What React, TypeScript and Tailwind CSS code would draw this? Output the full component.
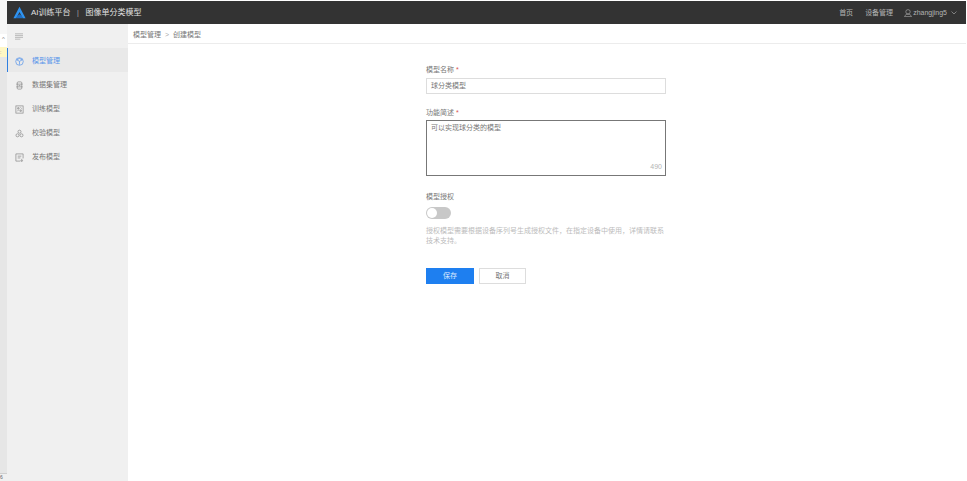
import React from "react";

function NavIcon({ kind }: { kind: string }) {
  const c = kind === "model" ? "#5b96ea" : "#8a8a8a";
  return (
    <svg width="9" height="9" viewBox="0 0 10 10" fill="none" stroke={c} strokeWidth="0.8" className="ml-[1px] shrink-0">
      {kind === "model" && (
        <>
          <circle cx="5" cy="5" r="4.2" />
          <path d="M2 3.2 5 4.8 8 3.2M5 4.8V8.6M2 3.2 5 1.6 8 3.2" />
        </>
      )}
      {kind === "data" && (
        <>
          <rect x="2.5" y="1" width="5" height="8" rx="1" />
          <path d="M1.5 3.5h7M1.5 6.5h7M4 5h2" />
        </>
      )}
      {kind === "train" && (
        <>
          <rect x="1" y="1" width="8" height="8" />
          <path d="M3 3h1.5v1.5H3zM5.5 5.5H7V7H5.5zM6 2.5 7.5 4M2.5 7 4 5.5" />
        </>
      )}
      {kind === "check" && (
        <>
          <circle cx="5" cy="3" r="1.7" />
          <circle cx="2.8" cy="7" r="1.7" />
          <circle cx="7.2" cy="7" r="1.7" />
        </>
      )}
      {kind === "publish" && (
        <>
          <path d="M9 6V1H1v8h5" />
          <path d="M3 3.5h4M3 5.5h3M7.5 6.5v3M6.3 8 7.5 9.4 8.7 8" />
        </>
      )}
    </svg>
  );
}

const nav = [
  { k: "model", t: "模型管理" },
  { k: "data", t: "数据集管理" },
  { k: "train", t: "训练模型" },
  { k: "check", t: "校验模型" },
  { k: "publish", t: "发布模型" },
];

export default function App() {
  return (
    <div
      className="flex h-[481px] w-[967px] overflow-hidden bg-white text-[7px] leading-[10px] text-[#777777]"
      style={{ fontFamily: '"Liberation Sans", "Noto Sans CJK SC", sans-serif' }}
    >
      {/* sliver of the window behind */}
      <div className="flex h-full w-[7px] shrink-0 flex-col bg-[#e6e6e6]">
        <div className="h-[34px] bg-[#f6f6f6]" />
        <div className="h-[13px] bg-white text-center text-[6px] leading-[10px] text-[#888888]">^</div>
        <div className="h-[10px] bg-[#fff7c4] text-[5px] leading-[10px] text-[#888888]">:</div>
        <div className="flex-1" />
        <div className="h-[8px] border-t border-[#cfcfcf] bg-[#f0f0f0] text-[5px] leading-[7px] text-[#666666]">6</div>
      </div>

      <div className="flex min-w-0 flex-1 flex-col pt-px pr-px">
        {/* header */}
        <div className="flex h-[23px] shrink-0 items-center justify-between bg-[#333333] pr-[9px] pl-[6px] text-[#dddddd]">
          <div className="flex items-center">
            <svg width="13" height="13" viewBox="0 0 15 14" className="shrink-0">
              <path d="M7.5 0.5 14.5 13.5H11.2L7.5 6.5 3.8 13.5H0.5Z" fill="#2f93f0" />
              <path d="M4.6 11 7.5 9 10.4 11 11.2 13.5H3.8Z" fill="#1f6fc4" />
            </svg>
            <span className="ml-[5px] text-[8px] text-[#e0e0e0]">AI训练平台</span>
            <span className="mx-[6.5px] text-[7px] text-[#aaaaaa]">|</span>
            <span className="text-[8px] text-[#e0e0e0]">图像单分类模型</span>
          </div>
          <div className="flex items-center text-[7px] text-[#b4b4b4]">
            <span>首页</span>
            <span className="ml-[12px]">设备管理</span>
            <svg width="8" height="8" viewBox="0 0 8 8" fill="none" stroke="#b4b4b4" strokeWidth="0.6" className="ml-[11px]">
              <circle cx="4" cy="2.8" r="2.2" />
              <path d="M0.5 7.6C1.2 5.8 2.4 5.2 4 5.2S6.8 5.8 7.5 7.6Z" />
            </svg>
            <span className="ml-px">zhangjing5</span>
            <svg width="6" height="4" viewBox="0 0 6 4" fill="none" stroke="#b4b4b4" strokeWidth="0.6" className="ml-[4px]">
              <path d="M0.5 0.5 3 3 5.5 0.5" />
            </svg>
          </div>
        </div>

        <div className="flex min-h-0 flex-1">
          {/* sidebar */}
          <div className="flex w-[121px] shrink-0 flex-col bg-[#f0f0f0]">
            <div className="flex h-[24px] items-center pl-[8px]">
              <svg width="8" height="7" viewBox="0 0 9 7" stroke="#999999" strokeWidth="0.7">
                <path d="M0 0.5h9M0 2.5h9M0 4.5h9M0 6.5h6" />
              </svg>
            </div>
            {nav.map((n, i) => (
              <div
                key={n.k}
                className={
                  i === 0
                    ? "flex h-[24px] items-center border-l border-[#2f7fe0] bg-[#e9e9e9] pt-[2px] pl-[6px] text-[#5b96ea]"
                    : "flex h-[24px] items-center pt-[2px] pl-[7px]"
                }
              >
                <NavIcon kind={n.k} />
                <span className="ml-[8px]">{n.t}</span>
              </div>
            ))}
          </div>

          {/* main */}
          <div className="flex min-w-0 flex-1 flex-col">
            <div className="flex h-[20px] shrink-0 items-center border-b border-[#ececec] pt-[2px] pl-[5px]">
              <span>模型管理</span>
              <span className="mx-[4px] text-[#aaaaaa]">&gt;</span>
              <span>创建模型</span>
            </div>

            <div className="ml-[298px] flex w-[240px] flex-col pt-[21px]">
              <div>
                模型名称 <span className="text-[#d9534f]">*</span>
              </div>
              <div className="mt-[3px] flex h-[16px] items-center border border-[#dddddd] pl-[4px]">球分类模型</div>

              <div className="mt-[14px]">
                功能简述 <span className="text-[#d9534f]">*</span>
              </div>
              <div className="relative mt-[2px] h-[56px] border border-[#777777] pt-[2px] pl-[4px]">
                可以实现球分类的模型
                <span className="absolute right-[3px] bottom-[3px] text-[#b4b4b4]">490</span>
              </div>

              <div className="mt-[16px]">模型授权</div>
              <div className="relative mt-[5px] h-[12px] w-[25px] rounded-full bg-[#c8c8c8]">
                <div className="absolute top-px left-px h-[10px] w-[10px] rounded-full bg-white" />
              </div>
              <div className="mt-[7px] text-[#bcbcbc]">
                授权模型需要根据设备序列号生成授权文件，在指定设备中使用，详情请联系技术支持。
              </div>

              <div className="mt-[22px] flex">
                <div className="flex h-[16px] w-[48px] items-center justify-center bg-[#1e7ff0] text-[#dbe9ff]">保存</div>
                <div className="ml-[5px] flex h-[16px] w-[47px] items-center justify-center border border-[#dddddd]">取消</div>
              </div>
            </div>
          </div>
        </div>
      </div>
    </div>
  );
}
